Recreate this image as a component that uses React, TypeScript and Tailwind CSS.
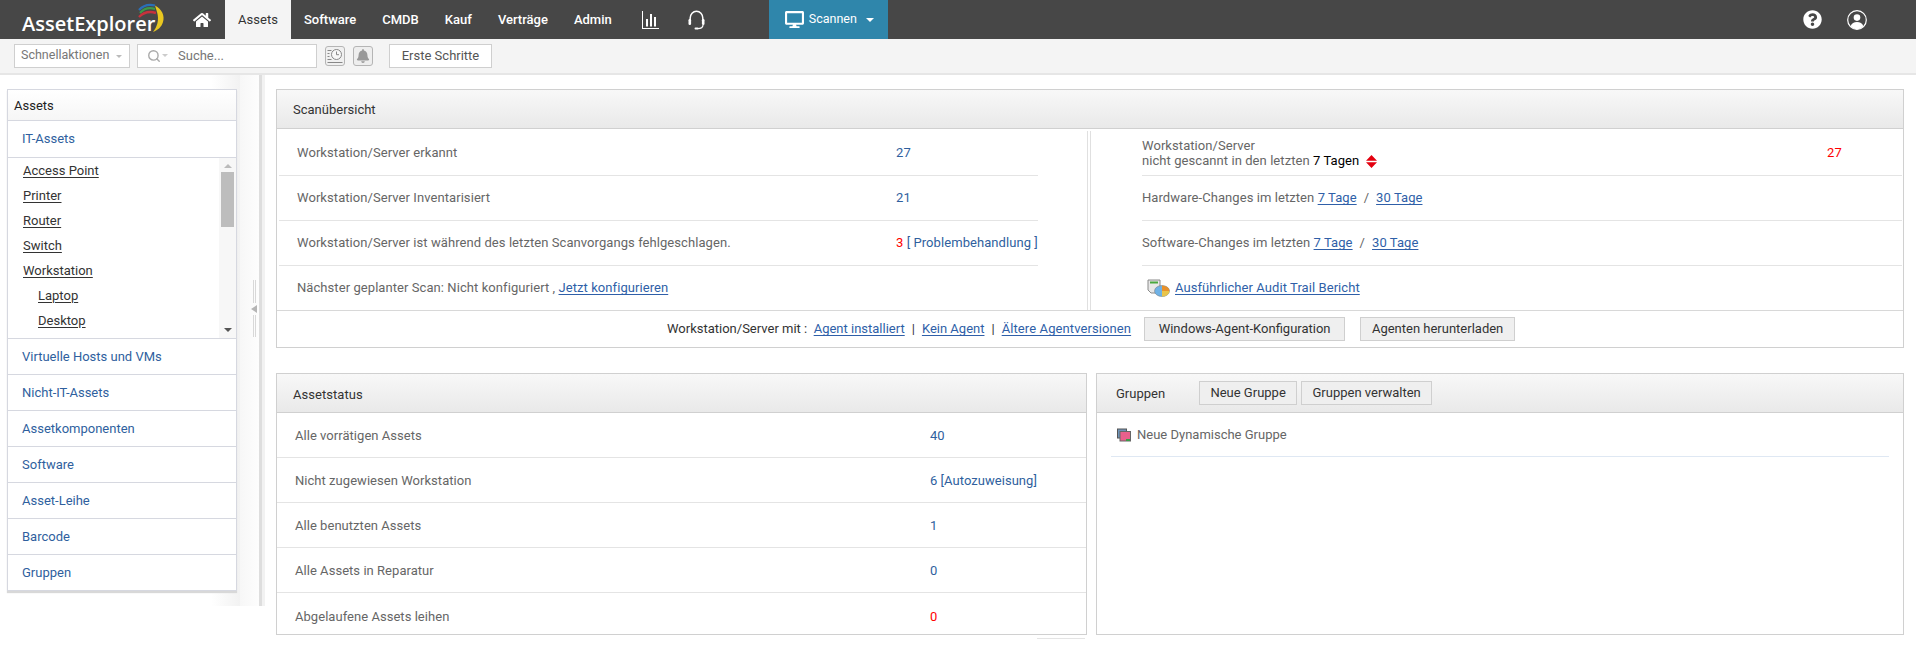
import type { ReactNode } from "react"
import { Search } from "lucide-react"
import { FaBell, FaDesktop, FaHome, FaQuestionCircle } from "react-icons/fa"

const navItems = ["Software", "CMDB", "Kauf", "Verträge", "Admin"]
const treeItems = [
  { name: "Access Point" },
  { name: "Printer" },
  { name: "Router" },
  { name: "Switch" },
  { name: "Workstation" },
  { name: "Laptop", sub: true },
  { name: "Desktop", sub: true }
]
const sideGroups = ["Virtuelle Hosts und VMs", "Nicht-IT-Assets", "Assetkomponenten", "Software", "Asset-Leihe", "Barcode", "Gruppen"]

function Logo() {
  return (
    <div className="relative h-[39px] w-[166px] shrink-0">
      <span className="absolute left-[22px] top-[11px] font-['Open_Sans',sans-serif] text-[20px] leading-[26px] font-semibold text-white">
        AssetExplorer
      </span>
      <svg className="absolute left-[136px] top-[2px]" width="32" height="32" viewBox="0 0 32 32" fill="none">
        <path d="M3 8 C7 3.5 13 2 19 3.5" stroke="#2a6fb8" strokeWidth="2.2" />
        <path d="M4 11 C8 6.5 14 5.5 19 7" stroke="#3d9a48" strokeWidth="2.2" />
        <path d="M3 15 C8 10 14 9 20 11" stroke="#c8323c" strokeWidth="2.4" />
        <path d="M19 3.5 C26 7 29 14 27 20 C25.5 25 22 28 17 30 C21 25 23.5 18 21 10" fill="#e9c720" />
      </svg>
    </div>
  )
}

function ChartIcon() {
  return (
    <svg width="17" height="18" viewBox="0 0 17 18" fill="white">
      <path d="M0 0h1v17h16v1H0z" />
      <rect x="4" y="8" width="2" height="7.5" />
      <rect x="8" y="3" width="2" height="12.5" />
      <rect x="12" y="6" width="2" height="9.5" />
    </svg>
  )
}

function HeadsetIcon() {
  return (
    <svg width="17" height="20" viewBox="0 0 17 20" fill="none" stroke="white">
      <path d="M2.2 11 V8 a6.3 6.8 0 0 1 12.6 0 V11" strokeWidth="1.5" />
      <rect x="0.5" y="9" width="2.6" height="6" rx="1.2" fill="white" stroke="none" />
      <rect x="13.9" y="9" width="2.6" height="6" rx="1.2" fill="white" stroke="none" />
      <path d="M15 15 C15 18 12 18.6 9.5 18.6" strokeWidth="1.2" />
      <rect x="6.5" y="17.6" width="4" height="2" rx="1" fill="white" stroke="none" />
    </svg>
  )
}

function UserIcon() {
  return (
    <svg width="20" height="20" viewBox="0 0 20 20" fill="none">
      <circle cx="10" cy="10" r="9.3" stroke="white" strokeWidth="1.2" />
      <circle cx="10" cy="7.6" r="3.3" fill="white" />
      <path d="M3.6 16.2 C4.6 13 7 12 10 12 C13 12 15.4 13 16.4 16.2 C14.6 18.2 12.4 19 10 19 C7.6 19 5.4 18.2 3.6 16.2z" fill="white" />
    </svg>
  )
}

function TopBar() {
  return (
    <header className="flex h-[39px] shrink-0 items-center bg-[#474747] text-[13px] font-medium text-white">
      <Logo />
      <FaHome className="ml-[27px] h-[18px] w-[18px] shrink-0" />
      <div className="ml-[14px] flex h-full w-[66px] items-center justify-center bg-[#f4f4f4] font-normal text-[#333]">Assets</div>
      <nav className="ml-[13px] flex items-center gap-[26px]">
        {navItems.map(item => (
          <span key={item}>{item}</span>
        ))}
      </nav>
      <div className="ml-[30px]">
        <ChartIcon />
      </div>
      <div className="ml-[29px]">
        <HeadsetIcon />
      </div>
      <div className="ml-[64px] flex h-full w-[119px] items-center bg-[#2f86ab] pl-[16px] text-[12px] font-normal">
        <FaDesktop className="size-[19px]" />
        <span className="ml-[5px] text-[12.5px]">Scannen</span>
        <span className="ml-[9px] size-0 border-x-[4px] border-t-[4px] border-x-transparent border-t-white" />
      </div>
      <div className="ml-auto flex items-center gap-[25px] pr-[49px]">
        <FaQuestionCircle className="size-[19px]" />
        <UserIcon />
      </div>
    </header>
  )
}

function ToolBar() {
  return (
    <div className="flex h-[36px] shrink-0 items-center border-b-2 border-[#e6e6e6] bg-[#f4f4f4] pb-[1px] pl-[14px] text-[13px] text-[#777]">
      <div className="flex h-[24px] w-[116px] items-center justify-between border border-[#cfcfcf] bg-white pl-[6px] pr-[7px]">
        <span className="text-[12.5px]">Schnellaktionen</span>
        <span className="mt-[2px] size-0 border-x-[3px] border-t-[3px] border-x-transparent border-t-[#bbb]" />
      </div>
      <div className="ml-[7px] flex h-[24px] w-[180px] items-center border border-[#cfcfcf] bg-white pl-[9px]">
        <Search className="size-[14px] text-[#aaa]" strokeWidth={2.4} />
        <span className="ml-[1px] size-0 border-x-[3px] border-t-[3px] border-x-transparent border-t-[#ccc]" />
        <span className="ml-[10px]">Suche...</span>
      </div>
      <div className="ml-[8px] flex size-[20px] items-center justify-center rounded-[3px] border border-[#b5b5b5] bg-[#f0f0f0]">
        <svg width="16" height="16" viewBox="0 0 16 16" fill="none" stroke="#888">
          <path d="M0.5 2.5h4M0.5 5.5h2M0.5 8.5h2M0.5 11.5h4M0.5 14.5h15" />
          <circle cx="9.5" cy="6.5" r="5" fill="#f7f7f7" />
          <path d="M9.5 3.5v3.2h2.5" />
        </svg>
      </div>
      <div className="ml-[8px] flex size-[20px] items-center justify-center rounded-[3px] border border-[#b5b5b5] bg-[#eeeeee]">
        <FaBell className="size-[14px] text-[#999]" />
      </div>
      <div className="ml-[16px] flex h-[24px] w-[103px] items-center justify-center border border-[#cfcfcf] bg-white text-[#555]">Erste Schritte</div>
    </div>
  )
}

function Sidebar() {
  return (
    <aside className="h-[531px] w-[240px] shrink-0 bg-gradient-to-r from-white from-[88%] to-[#f2f2f2] pl-[7px] pt-[14px] text-[13px]">
      <div className="w-[230px] border border-[#d6d8e0] bg-white shadow-[0_2px_1px_#d8d8d8]">
        <div className="flex h-[30px] items-center bg-gradient-to-b from-white to-[#f6f6f6] pl-[6px] pt-[2px] text-[#222]">Assets</div>
        <div className="flex h-[37px] items-center border-t border-[#d6d8e0] pl-[14px] text-[#2f5f9e]">IT-Assets</div>
        <div className="flex h-[181px] border-t border-[#d6d8e0]">
          <ul className="flex-1 pl-[15px]">
            {treeItems.map(item => (
              <li key={item.name} className={item.sub ? "flex h-[25.2px] items-center pl-[15px]" : "flex h-[25px] items-center"}>
                <a className="text-[#333] underline underline-offset-2">{item.name}</a>
              </li>
            ))}
          </ul>
          <div className="flex w-[17px] flex-col items-center bg-[#f7f7f7] py-[6px]">
            <span className="size-0 border-x-[4px] border-b-[4px] border-x-transparent border-b-[#bbb]" />
            <span className="mt-[4px] h-[55px] w-[13px] bg-[#bdbdbd]" />
            <span className="mt-auto size-0 border-x-[4px] border-t-[4px] border-x-transparent border-t-[#555]" />
          </div>
        </div>
        {sideGroups.map(group => (
          <div key={group} className="flex h-[36px] items-center border-t border-[#d6d8e0] pl-[14px] text-[#2f5f9e]">
            {group}
          </div>
        ))}
      </div>
    </aside>
  )
}

function Splitter() {
  return (
    <div className="flex h-[531px] w-[25px] shrink-0 bg-gradient-to-r from-[#f7f7f7] to-white">
      <div className="relative ml-[19px] h-full w-[3px] bg-[#dedede]">
        <div className="absolute right-[5px] top-[205px] flex h-[57px] w-[6px] flex-col items-center">
          <span className="h-[23px] w-[3px] border-x border-[#d8d8d8]" />
          <span className="my-[2px] h-0 w-0 border-y-[4px] border-r-[6px] border-y-transparent border-r-[#b5b5b5]" />
          <span className="h-[22px] w-[3px] border-x border-[#d8d8d8]" />
        </div>
      </div>
      <div className="h-full w-[3px] bg-[#f2f2f2]" />
    </div>
  )
}

function PanelHeader({ children }: { children: ReactNode }) {
  return (
    <div className="flex h-[39px] shrink-0 items-center border-b border-[#d0d0d0] bg-gradient-to-b from-[#f8f8f8] to-[#e9e9e9] pl-[16px] text-[13px] text-[#333]">
      {children}
    </div>
  )
}

function Btn({ children, className }: { children: ReactNode; className: string }) {
  return <div className={"flex h-[24px] items-center justify-center border border-[#cfcfcf] bg-[#efefef] text-[13px] text-[#333] " + className}>{children}</div>
}

function A({ children }: { children: ReactNode }) {
  return <a className="text-[#2f5fa8] underline underline-offset-2">{children}</a>
}

function ScanRow({ label, value, h = "h-[45px]" }: { label: ReactNode; value?: ReactNode; h?: string }) {
  return (
    <div className={"flex items-center border-b border-[#e4e4e4] pl-[18px] " + h}>
      <div className="w-[599px]">{label}</div>
      {value}
    </div>
  )
}

function ScanPanel() {
  return (
    <section className="w-[1628px] border border-[#d0d0d0] text-[13px] text-[#666]">
      <PanelHeader>
        <span className="pt-[2px]">Scanübersicht</span>
      </PanelHeader>
      <div className="flex h-[182px] border-b border-[#d8d8d8] tracking-[0.07px]">
        <div className="ml-[2px] w-[759px] shrink-0">
          <ScanRow h="h-[47px] pt-[2px]" label="Workstation/Server erkannt" value={<span className="text-[#2f5f9e]">27</span>} />
          <ScanRow label="Workstation/Server Inventarisiert" value={<span className="text-[#2f5f9e]">21</span>} />
          <ScanRow
            label="Workstation/Server ist während des letzten Scanvorgangs fehlgeschlagen."
            value={
              <span className="whitespace-nowrap text-[#2f5f9e]">
                <span className="text-[#f00]">3</span> [ Problembehandlung ]
              </span>
            }
          />
          <div className="flex h-[44px] items-center pl-[18px]">
            Nächster geplanter Scan: Nicht konfiguriert ,&nbsp;<A>Jetzt konfigurieren</A>
          </div>
        </div>
        <div className="ml-[49px] mt-[2px] w-[4px] shrink-0 border-x border-[#e0e0e0]" />
        <div className="ml-[51px] flex-1 pr-[1px]">
          <div className="flex h-[47px] items-center border-b border-[#e4e4e4] pt-[2px]">
            <div className="w-[685px] leading-[15px]">
              Workstation/Server
              <br />
              nicht gescannt in den letzten <span className="text-black">7 Tagen</span>
              <svg className="ml-[7px] inline" width="11" height="13" viewBox="0 0 11 13" fill="#e3000f">
                <path d="M5.5 0 11 5.7H0zM0 7.3h11L5.5 13z" />
              </svg>
            </div>
            <span className="text-[#f00]">27</span>
          </div>
          <div className="flex h-[45px] items-center border-b border-[#e4e4e4]">
            Hardware-Changes im letzten&nbsp;<A>7 Tage</A>
            <span className="mx-[7px]">/</span>
            <A>30 Tage</A>
          </div>
          <div className="flex h-[45px] items-center border-b border-[#e4e4e4]">
            Software-Changes im letzten&nbsp;<A>7 Tage</A>
            <span className="mx-[7px]">/</span>
            <A>30 Tage</A>
          </div>
          <div className="flex h-[44px] items-center pl-[5px]">
            <svg width="23" height="18" viewBox="0 0 23 18" className="mr-[5px]">
              <path d="M1 1h12v13H4L1 11z" fill="#e8e8e8" stroke="#8a8a8a" />
              <rect x="3" y="2.5" width="8" height="2" fill="#4aa83f" />
              <ellipse cx="15" cy="12" rx="7.5" ry="5.5" fill="#6fb2e6" stroke="#777" strokeWidth="0.5" />
              <path d="M15 12V6.5a7.5 5.5 0 0 1 7.5 5.5z" fill="#e8912c" />
              <path d="M15 12h7.5a7.5 5.5 0 0 1-7.5 5.5z" fill="#e9c54a" />
            </svg>
            <A>Ausführlicher Audit Trail Bericht</A>
          </div>
        </div>
      </div>
      <div className="flex h-[36px] items-center pl-[390px] text-[#333]">
        Workstation/Server mit :&nbsp;&nbsp;<A>Agent installiert</A>
        <span className="mx-[7px]">|</span>
        <A>Kein Agent</A>
        <span className="mx-[7px]">|</span>
        <span className="tracking-[0.1px]">
          <A>Ältere Agentversionen</A>
        </span>
        <Btn className="ml-[13px] w-[201px]">Windows-Agent-Konfiguration</Btn>
        <Btn className="ml-[15px] w-[155px]">Agenten herunterladen</Btn>
      </div>
    </section>
  )
}

const statusRows = [
  { label: "Alle vorrätigen Assets", value: "40" },
  { label: "Nicht zugewiesen Workstation", value: "6 [Autozuweisung]" },
  { label: "Alle benutzten Assets", value: "1" },
  { label: "Alle Assets in Reparatur", value: "0" },
  { label: "Abgelaufene Assets leihen", value: "0", red: true }
]

function StatusPanel() {
  return (
    <section className="flex h-[262px] w-[811px] shrink-0 flex-col border border-[#d0d0d0] text-[13px] tracking-[0.04px] text-[#666]">
      <PanelHeader>
        <span className="pt-[3px]">Assetstatus</span>
      </PanelHeader>
      {statusRows.map((row, i) => (
        <div key={row.label} className={i < 4 ? "flex h-[45px] items-center border-b border-[#e4e4e4] pl-[18px] pt-[1px]" : "flex flex-1 items-center pl-[18px] pt-[6px]"}>
          <div className="w-[635px]">{row.label}</div>
          <span className={row.red ? "text-[#f00]" : "text-[#2f5f9e]"}>{row.value}</span>
        </div>
      ))}
    </section>
  )
}

function GroupPanel() {
  return (
    <section className="flex h-[262px] flex-1 flex-col border border-[#d0d0d0] text-[13px] text-[#666]">
      <PanelHeader>
        <span className="ml-[3px] pt-[1px]">Gruppen</span>
        <Btn className="ml-[34px] w-[98px]">Neue Gruppe</Btn>
        <Btn className="ml-[4px] w-[131px]">Gruppen verwalten</Btn>
      </PanelHeader>
      <div className="mx-[14px] flex h-[44px] items-center border-b border-[#dfe8f3] pl-[6px]">
        <svg width="14" height="14" viewBox="0 0 14 14" className="mr-[6px]">
          <rect x="0.5" y="1" width="9" height="9" fill="#6d93b8" stroke="#555" />
          <rect x="3" y="3.5" width="10.5" height="9.5" fill="#e8608c" stroke="#666" />
          <rect x="9" y="11" width="4" height="2" fill="#3c9a48" />
        </svg>
        Neue Dynamische Gruppe
      </div>
    </section>
  )
}

export default function App() {
  return (
    <div className="flex h-[652px] w-[1916px] flex-col overflow-hidden bg-white font-['Roboto',sans-serif]">
      <TopBar />
      <ToolBar />
      <div className="flex flex-1">
        <Sidebar />
        <Splitter />
        <main className="flex-1 pl-[11px] pt-[14px]">
          <ScanPanel />
          <div className="mt-[25px] flex w-[1628px] gap-[9px]">
            <StatusPanel />
            <GroupPanel />
          </div>
          <div className="ml-[761px] mt-[3px] h-px w-[48px] bg-[#e4e4e4]" />
        </main>
      </div>
    </div>
  )
}
